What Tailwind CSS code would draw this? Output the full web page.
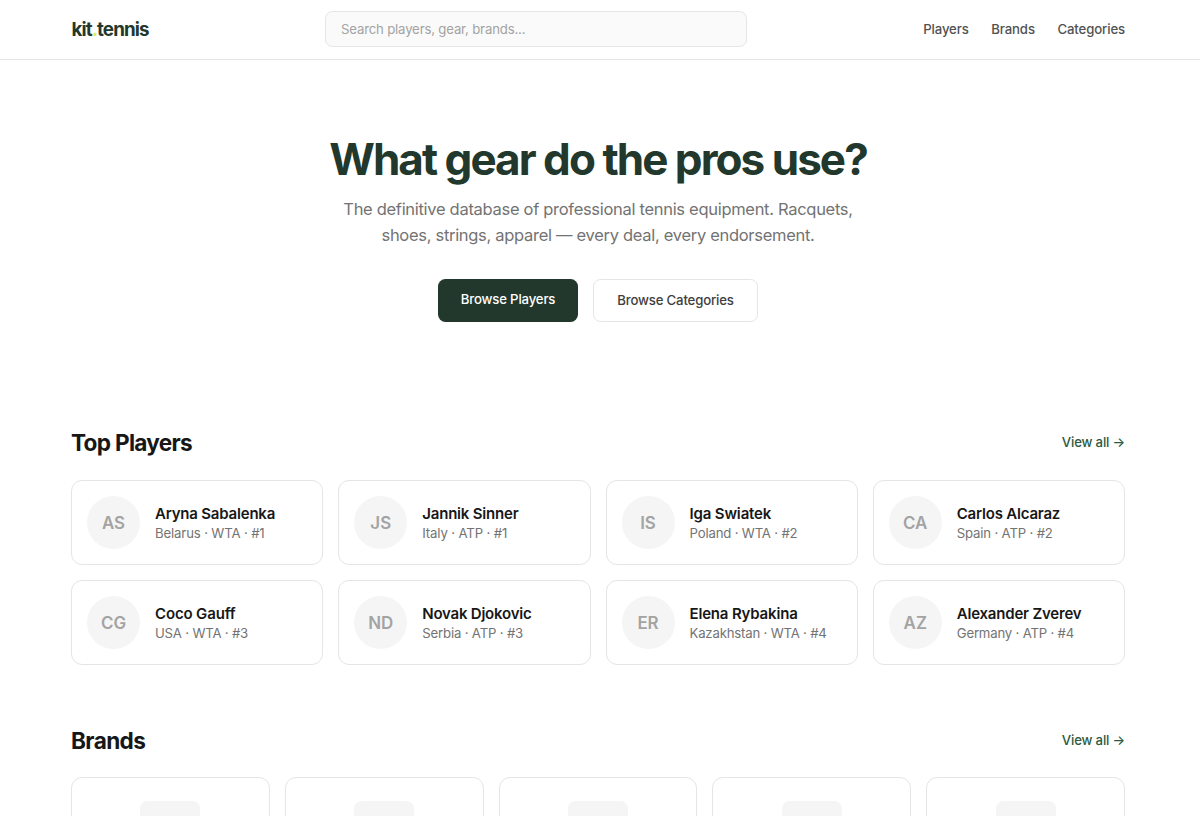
<!DOCTYPE html>
<html lang="en">
<head>
  <meta charset="UTF-8">
  <meta name="viewport" content="width=device-width, initial-scale=1.0">
  <title>kit.tennis</title>
  <script src="https://cdn.jsdelivr.net/npm/@tailwindcss/browser@4"></script>
</head>
<body class="h-screen overflow-hidden bg-white font-['Inter','Liberation_Sans',sans-serif] text-[#171717]">

  <!-- Header -->
  <header class="h-[60px] border-b border-[#e5e5e5]">
    <div class="ml-[71px] w-[1054px] h-[59px] flex items-center justify-between">
      <a href="#" class="w-[254px] pt-[2px] pl-[0.5px] text-[18.8px] font-bold tracking-[-0.9px] text-[#22382c]">kit<span class="text-[#d9ec5a]">.</span>tennis</a>
      <input type="text" placeholder="Search players, gear, brands..." class="w-[422px] h-9 mb-px px-[15px] rounded-[7.5px] border border-[#e5e5e5] bg-[#fafafa] text-[13.2px] tracking-[-0.18px] placeholder:text-[#a3a3a3]">
      <nav class="w-[378px] flex justify-end gap-[22.6px] text-[13.2px] tracking-[-0.13px] font-medium text-[#525252]">
        <a href="#">Players</a>
        <a href="#">Brands</a>
        <a href="#">Categories</a>
      </nav>
    </div>
  </header>

  <main class="ml-[71px] w-[1054px]">
    <!-- Hero -->
    <section class="pt-[74px] h-[368px] text-center">
      <h1 class="text-[44px] leading-[50px] font-bold tracking-[-1.95px] text-[#22382c]">What gear do the pros use?</h1>
      <p class="mt-[12px] mx-auto w-[527px] text-[16.5px] leading-[26.4px] tracking-[-0.3px] text-[#737373]">The definitive database of professional tennis equipment. Racquets, shoes, strings, apparel — every deal, every endorsement.</p>
      <div class="mt-[30px] flex justify-center gap-[15px] text-[13.2px] tracking-[-0.17px] font-medium">
        <a href="#" class="w-[140px] h-[43px] pb-px flex items-center justify-center rounded-[7.5px] bg-[#22382c] text-white">Browse Players</a>
        <a href="#" class="w-[165px] h-[43px] pt-px flex items-center justify-center rounded-[7.5px] border border-[#e5e5e5] text-[#404040]">Browse Categories</a>
      </div>
    </section>

    <!-- Top players -->
    <section>
      <div class="h-[52px] flex items-start justify-between">
        <h2 class="text-[22.6px] leading-[30px] font-bold tracking-[-0.7px]">Top Players</h2>
        <a href="#" class="text-[13.2px] leading-[28px] tracking-[-0.17px] font-medium text-[#2d5a41]">View all →</a>
      </div>
      <div class="grid grid-cols-4 gap-[15px]">
        <a href="#" class="h-[85px] px-[15px] flex items-center gap-[15px] rounded-[11px] border border-[#e5e5e5]">
          <div class="size-[53px] shrink-0 pt-[2px] rounded-full bg-[#f5f5f5] flex items-center justify-center text-[16.9px] font-semibold text-[#a3a3a3]">AS</div>
          <div class="pt-px">
            <p class="text-[15px] leading-[21px] tracking-[-0.2px] font-semibold">Aryna Sabalenka</p>
            <p class="text-[13.2px] leading-[19px] tracking-[-0.15px] text-[#737373]">Belarus · WTA · #1</p>
          </div>
        </a>
        <a href="#" class="h-[85px] px-[15px] flex items-center gap-[15px] rounded-[11px] border border-[#e5e5e5]">
          <div class="size-[53px] shrink-0 pt-[2px] rounded-full bg-[#f5f5f5] flex items-center justify-center text-[16.9px] font-semibold text-[#a3a3a3]">JS</div>
          <div class="pt-px">
            <p class="text-[15px] leading-[21px] tracking-[-0.2px] font-semibold">Jannik Sinner</p>
            <p class="text-[13.2px] leading-[19px] tracking-[-0.15px] text-[#737373]">Italy · ATP · #1</p>
          </div>
        </a>
        <a href="#" class="h-[85px] px-[15px] flex items-center gap-[15px] rounded-[11px] border border-[#e5e5e5]">
          <div class="size-[53px] shrink-0 pt-[2px] rounded-full bg-[#f5f5f5] flex items-center justify-center text-[16.9px] font-semibold text-[#a3a3a3]">IS</div>
          <div class="pt-px">
            <p class="text-[15px] leading-[21px] tracking-[-0.15px] font-semibold">Iga Swiatek</p>
            <p class="text-[13.2px] leading-[19px] tracking-[-0.18px] text-[#737373]">Poland · WTA · #2</p>
          </div>
        </a>
        <a href="#" class="h-[85px] px-[15px] flex items-center gap-[15px] rounded-[11px] border border-[#e5e5e5]">
          <div class="size-[53px] shrink-0 pt-[2px] rounded-full bg-[#f5f5f5] flex items-center justify-center text-[16.9px] font-semibold text-[#a3a3a3]">CA</div>
          <div class="pt-px">
            <p class="text-[15px] leading-[21px] tracking-[-0.2px] font-semibold">Carlos Alcaraz</p>
            <p class="text-[13.2px] leading-[19px] tracking-[-0.18px] text-[#737373]">Spain · ATP · #2</p>
          </div>
        </a>
        <a href="#" class="h-[85px] px-[15px] flex items-center gap-[15px] rounded-[11px] border border-[#e5e5e5]">
          <div class="size-[53px] shrink-0 pt-[2px] rounded-full bg-[#f5f5f5] flex items-center justify-center text-[16.9px] font-semibold text-[#a3a3a3]">CG</div>
          <div class="pt-px">
            <p class="text-[15px] leading-[21px] tracking-[-0.15px] font-semibold">Coco Gauff</p>
            <p class="text-[13.2px] leading-[19px] tracking-[-0.2px] text-[#737373]">USA · WTA · #3</p>
          </div>
        </a>
        <a href="#" class="h-[85px] px-[15px] flex items-center gap-[15px] rounded-[11px] border border-[#e5e5e5]">
          <div class="size-[53px] shrink-0 pt-[2px] rounded-full bg-[#f5f5f5] flex items-center justify-center text-[16.9px] font-semibold text-[#a3a3a3]">ND</div>
          <div class="pt-px">
            <p class="text-[15px] leading-[21px] tracking-[-0.22px] font-semibold">Novak Djokovic</p>
            <p class="text-[13.2px] leading-[19px] tracking-[-0.18px] text-[#737373]">Serbia · ATP · #3</p>
          </div>
        </a>
        <a href="#" class="h-[85px] px-[15px] flex items-center gap-[15px] rounded-[11px] border border-[#e5e5e5]">
          <div class="size-[53px] shrink-0 pt-[2px] rounded-full bg-[#f5f5f5] flex items-center justify-center text-[16.9px] font-semibold text-[#a3a3a3]">ER</div>
          <div class="pt-px">
            <p class="text-[15px] leading-[21px] tracking-[-0.17px] font-semibold">Elena Rybakina</p>
            <p class="text-[13.2px] leading-[19px] tracking-[-0.2px] text-[#737373]">Kazakhstan · WTA · #4</p>
          </div>
        </a>
        <a href="#" class="h-[85px] px-[15px] flex items-center gap-[15px] rounded-[11px] border border-[#e5e5e5]">
          <div class="size-[53px] shrink-0 pt-[2px] rounded-full bg-[#f5f5f5] flex items-center justify-center text-[16.9px] font-semibold text-[#a3a3a3]">AZ</div>
          <div class="pt-px">
            <p class="text-[15px] leading-[21px] tracking-[-0.2px] font-semibold">Alexander Zverev</p>
            <p class="text-[13.2px] leading-[19px] tracking-[-0.2px] text-[#737373]">Germany · ATP · #4</p>
          </div>
        </a>
      </div>
    </section>

    <!-- Brands -->
    <section class="mt-[60px]">
      <div class="h-[52px] flex items-start justify-between">
        <h2 class="text-[22.6px] leading-[31px] font-bold tracking-[-0.6px]">Brands</h2>
        <a href="#" class="text-[13.2px] leading-[30px] tracking-[-0.17px] font-medium text-[#2d5a41]">View all →</a>
      </div>
      <div class="grid grid-cols-5 gap-[15px]">
        <div class="h-[150px] pt-[23px] rounded-[11px] border border-[#e5e5e5]"><div class="mx-auto size-[60px] rounded-[7.5px] bg-[#f5f5f5]"></div></div>
        <div class="h-[150px] pt-[23px] rounded-[11px] border border-[#e5e5e5]"><div class="mx-auto size-[60px] rounded-[7.5px] bg-[#f5f5f5]"></div></div>
        <div class="h-[150px] pt-[23px] rounded-[11px] border border-[#e5e5e5]"><div class="mx-auto size-[60px] rounded-[7.5px] bg-[#f5f5f5]"></div></div>
        <div class="h-[150px] pt-[23px] rounded-[11px] border border-[#e5e5e5]"><div class="mx-auto size-[60px] rounded-[7.5px] bg-[#f5f5f5]"></div></div>
        <div class="h-[150px] pt-[23px] rounded-[11px] border border-[#e5e5e5]"><div class="mx-auto size-[60px] rounded-[7.5px] bg-[#f5f5f5]"></div></div>
      </div>
    </section>
  </main>

</body>
</html>
